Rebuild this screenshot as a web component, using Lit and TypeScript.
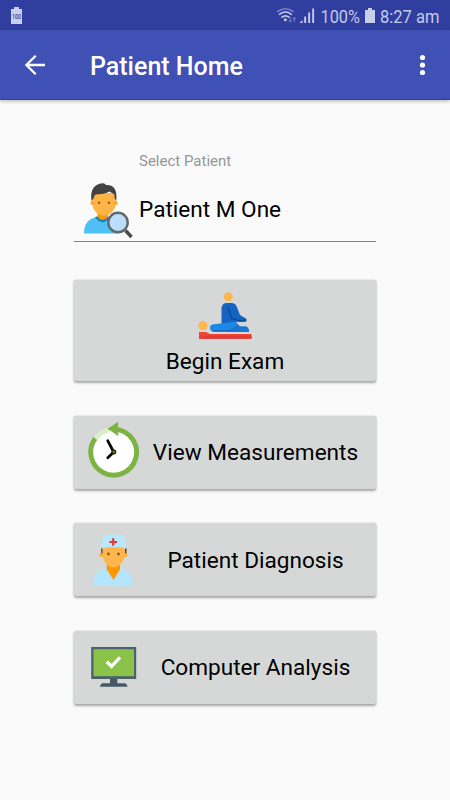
import { LitElement, html, css, svg } from "lit";
import { customElement, property } from "lit/decorators.js";

const personSearch = html`<svg width="52" height="58" viewBox="82 181 52 58">
  <path d="M84 233.500C84 223 89 218.500 97 217L101 222L107 217C115 218.500 119 224 119 233.500Z" fill="#4fc0f6"/>
  <path d="M95 217.300Q102 227 110 217.500L107 216H98Z" fill="#1b80b8"/>
  <path d="M97.500 210H108V217Q102.500 223 97.500 217Z" fill="#fb9800"/>
  <path d="M92.300 193H115.500V205C115 211 109 215.800 104 215.800S93 211 92.500 205Z" fill="#ffb446"/>
  <circle cx="92.300" cy="203" r="2" fill="#ffa726"/><circle cx="115.700" cy="203" r="2" fill="#ffa726"/>
  <path d="M91.500 201C90 190 94 183.500 104 183.300L106 185C114 184.500 117.500 190 116.300 201L114.500 198V194.500L109.500 191.500C104 194.500 98 194 95 194.800L93.500 198.500Z" fill="#424242"/>
  <circle cx="99" cy="202.700" r="1.200" fill="#96561a"/><circle cx="109" cy="202.700" r="1.200" fill="#96561a"/>
  <path d="M125.500 230.500L131.500 237" stroke="#454b4e" stroke-width="3.400"/>
  <circle cx="118" cy="222.500" r="9.700" fill="#bbdefb" stroke="#63686b" stroke-width="2.400"/>
</svg>`;

const exam = html`<svg width="56" height="50" viewBox="197 290 56 50">
  <path d="M199 332H206L210 334H251.500V338.700H199Z" fill="#f04438"/>
  <path d="M211 335.500H251.500V338.700H199V337Z" fill="#de3b35"/>
  <circle cx="203" cy="325.700" r="4.600" fill="#ffb74d"/>
  <circle cx="228.300" cy="296.800" r="4.500" fill="#ffb74d"/>
  <path d="M221.500 325V308Q222 303 227 303H231Q235 303 236.500 306L240 315L246 318.500Q247.500 320 246 321.500H236L238 326H221.500Z" fill="#1565c0"/>
  <path d="M228 308L231.500 318L239 321L246 320.500" fill="none" stroke="#0d4ea8" stroke-width="1.800"/>
  <path d="M214 324.200L232 322H236L240 326.500H246Q249 327 249 332H214Q210 331.500 210 328T214 324.200Z" fill="#1e88e5"/>
  <path d="M228 331.900L239 326.500H245.500Q249 327.500 249 331.900Z" fill="#1976d2"/>
  <path d="M213 330.700H229L239 325.500" fill="none" stroke="#1669c4" stroke-width="1.200"/>
</svg>`;

const clock = html`<svg width="54" height="62" viewBox="87 421 54 62">
  <circle cx="113.800" cy="452.200" r="22.800" fill="#fff"/>
  <path d="M95.300 438.500A22.900 22.900 0 0 1 109 429.800" fill="none" stroke="#dcedc8" stroke-width="4.800"/>
  <path d="M116 429.400A22.900 22.900 0 1 1 95.300 438.500" fill="none" stroke="#7cb342" stroke-width="4.900"/>
  <path d="M107.500 428.700L118.200 421.800V436Z" fill="#7cb342"/>
  <path d="M107.800 440.800L113.700 452L107.800 457.800" fill="none" stroke="#050505" stroke-width="2.800" stroke-linecap="round"/>
  <circle cx="113.800" cy="452" r="2.500" fill="#20230a"/><circle cx="113.800" cy="452" r="1.100" fill="#8b9938"/>
</svg>`;

const doctor = html`<svg width="44" height="56" viewBox="92.500 531 44 56">
  <path d="M93.500 584C94 574 98 569 107 567H120C129 569 133 574 133.500 584Z" fill="#b3e5fc"/>
  <path d="M107.300 562H120.500V568.500L114 579L107.300 568.500Z" fill="#ff9800"/>
  <path d="M101.700 547V554H103.500V546ZM127 547V554H125V546Z" fill="#424242"/>
  <circle cx="102" cy="554" r="2" fill="#ffa726"/><circle cx="126" cy="554" r="2" fill="#ffa726"/>
  <path d="M103 546H125.500V555C124 562 118 566.500 114.300 566.500S104 562 103 555Z" fill="#ffb64d"/>
  <path d="M102 548L103 537Q103.200 534.500 106 534L114 533L122 534Q125 534.500 125.200 537L126.800 548L122 546.300H106Z" fill="#b9e7fc"/>
  <path d="M113.700 537.200V544.800M109.900 541H117.500" stroke="#e53935" stroke-width="2.200"/>
  <circle cx="109" cy="553" r="1.400" fill="#8b591c"/><circle cx="119" cy="553" r="1.400" fill="#8b591c"/>
</svg>`;

const monitor = html`<svg width="48" height="44" viewBox="90 645 48 44">
  <path d="M110 677H117.300V684H110Z" fill="#455a64"/>
  <path d="M100 686.800Q100.500 683.500 103 683.300H124.500Q127 683.500 127.500 686.800Z" fill="#455a64"/>
  <rect x="91.200" y="647" width="45" height="32" fill="#4b616c"/>
  <rect x="93.500" y="649.200" width="40.500" height="27" fill="#8bc34a"/>
  <path d="M106.700 661.800L111.500 666.300L120 657.300" fill="none" stroke="#fff" stroke-width="3.300"/>
</svg>`;

const bars = [0, 1, 2].map(
  (i) => svg`<rect x=${304.2 + i * 4} y=${16.5 - i * 4} width="1.900" height=${6.5 + i * 4} fill="#c5cae9"/>`
);

@customElement("exam-button")
class ExamButton extends LitElement {
  @property({ type: Boolean, reflect: true }) tall = false;

  static styles = css`
    :host { display: block; }
    button {
      display: flex; align-items: center; box-sizing: border-box;
      width: 302px; height: 73px; padding: 0; border: 0; border-radius: 2px;
      background: #d6d8d7; color: #000; font: 22.600px/26px Roboto, sans-serif; white-space: nowrap;
      box-shadow: 0 1.500px 2.500px rgba(0, 0, 0, .32), 0 0 1.500px rgba(0, 0, 0, .16);
    }
    .icon { display: flex; width: 54px; margin-left: 13px; justify-content: center; flex: none; }
    .label { flex: 1; text-align: center; padding: 2px 6px 0 0; }
    :host([tall]) button { flex-direction: column; height: 101px; padding-top: 10px; }
    :host([tall]) .icon { width: 56px; margin: 0; }
    :host([tall]) .label { flex: none; padding: 0; margin-top: 9px; }
  `;
  render() {
    return html`<button>
      <span class="icon"><slot name="icon"></slot></span>
      <span class="label"><slot></slot></span>
    </button>`;
  }
}

@customElement("app-root")
class AppRoot extends LitElement {
  static styles = css`
    :host {
      display: flex; flex-direction: column; width: 450px; height: 800px; overflow: hidden;
      background: #fafafa; font-family: Roboto, sans-serif; color: #000;
    }
    svg { display: block; flex: none; }
    .status { height: 30px; background: #303f9f; flex: none; }
    .bar {
      height: 70px; flex: none; box-sizing: border-box; padding: 0 16px 0 24px;
      display: flex; align-items: center; background: #3f51b5; color: #fff;
      border-bottom: 1px solid #31429d; box-shadow: 0 1px 4px rgba(0, 0, 0, .3);
    }
    .title { margin: 4px auto 0 44px; font-size: 25px; line-height: 30px; font-weight: 500; }
    main { width: 302px; margin: 0 auto; padding-top: 51px; }
    .hint { padding-left: 65px; font-size: 15px; line-height: 20px; color: #969696; }
    .field {
      display: flex; box-sizing: border-box; height: 61px; margin-top: 10px; padding-left: 8px;
      border-bottom: 1px solid #858585;
    }
    .name { margin: 15px 0 0 5px; font-size: 22.600px; line-height: 28px; }
    .actions { display: flex; flex-direction: column; gap: 34.500px; padding-top: 38px; }
  `;
  render() {
    return html`
      <div class="status">
        <svg width="450" height="30" viewBox="0 0 450 30" font-family="Roboto, sans-serif">
          <path d="M11 9H14V7H19V9H22V24H11Z" fill="#c9ceeb"/>
          <text x="12" y="19" font-size="6.500" font-weight="500" textLength="9" lengthAdjust="spacingAndGlyphs" fill="#35449f">100</text>
          <g fill="none" stroke-linecap="round">
            <path d="M277.500 11.500Q285.500 6 293 11.500" stroke="#7782c3" stroke-width="1.600"/>
            <path d="M279.500 14.300Q285.500 9.700 291.300 14.300M282 17.200Q285.500 14.500 289 17.200" stroke="#c5cae9" stroke-width="1.600"/>
            <path d="M290.300 18V22M289 20.700L290.300 22L291.600 20.700M294.300 21.500V17.500M293 18.800L294.300 17.500L295.600 18.800" stroke="#7782c3" stroke-width="1"/>
          </g>
          <circle cx="285.300" cy="19.700" r="1.500" fill="#c5cae9"/>
          <path d="M299.500 23L302.500 20V23Z" fill="#c5cae9"/>
          ${bars}
          <text x="320.500" y="22.700" font-size="18.500" textLength="39.500" lengthAdjust="spacingAndGlyphs" fill="#c5cae9">100%</text>
          <path d="M365 10H368V8H372V10H375V23H365Z" fill="#c9ceeb"/>
          <text x="380" y="22.700" font-size="18.500" textLength="59.500" lengthAdjust="spacingAndGlyphs" fill="#c5cae9">8:27 am</text>
        </svg>
      </div>
      <header class="bar">
        <svg width="22" height="22" viewBox="24 54 22 22">
          <path d="M45 65H27M35.700 55.700L26.400 65L35.700 74.300" fill="none" stroke="#fff" stroke-width="2.300"/>
        </svg>
        <div class="title">Patient Home</div>
        <svg width="24" height="24" viewBox="410 53 24 24" fill="#fff">
          <circle cx="422.500" cy="57.500" r="2.600"/><circle cx="422.500" cy="65" r="2.600"/><circle cx="422.500" cy="72.500" r="2.600"/>
        </svg>
      </header>
      <main>
        <div class="hint">Select Patient</div>
        <div class="field">${personSearch}<div class="name">Patient M One</div></div>
        <div class="actions">
          <exam-button tall><span slot="icon">${exam}</span>Begin Exam</exam-button>
          <exam-button><span slot="icon">${clock}</span>View Measurements</exam-button>
          <exam-button><span slot="icon">${doctor}</span>Patient Diagnosis</exam-button>
          <exam-button><span slot="icon">${monitor}</span>Computer Analysis</exam-button>
        </div>
      </main>`;
  }
}
